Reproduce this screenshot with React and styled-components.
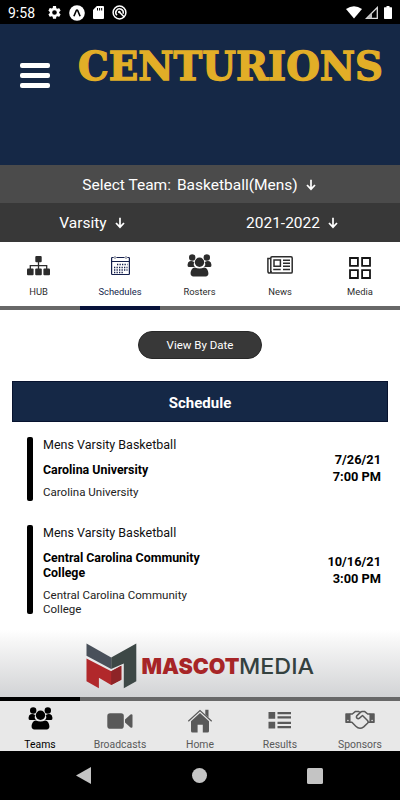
import React from "react";
import styled, { createGlobalStyle } from "styled-components";

const Global = createGlobalStyle`
  * { box-sizing: border-box; }
  body { margin: 0; background: #fff; font-family: Roboto, "Liberation Sans", sans-serif; }
  svg { display: block; flex: none; }
`;

const Screen = styled.div`
  width: 400px;
  height: 800px;
  display: flex;
  flex-direction: column;
  overflow: hidden;
  background: #fff;
`;
const StatusBar = styled.div`
  height: 24px;
  flex: none;
  background: #000;
  color: #fff;
  display: flex;
  align-items: center;
  justify-content: space-between;
  padding: 1px 8px 0;
`;
const StatusGroup = styled.div`
  display: flex;
  align-items: center;
  gap: ${(p) => p.$gap}px;
`;
const Clock = styled.span`
  font-size: 14px;
  line-height: 22px;
  width: 32px;
`;
const Header = styled.header`
  height: 141px;
  flex: none;
  background: #152846;
  display: flex;
  align-items: flex-start;
`;
const MenuButton = styled.div`
  margin: 39px 0 0 20px;
  width: 30px;
  display: flex;
  flex-direction: column;
  gap: 5px;
`;
const MenuLine = styled.div`
  height: 5px;
  border-radius: 2px;
  background: #fff;
`;
const TeamTitle = styled.svg`
  margin: 18px 0 0 26px;
  overflow: visible;
`;
const SelectRow = styled.div`
  height: ${(p) => p.$h}px;
  flex: none;
  display: grid;
  grid-template-columns: ${(p) => p.$cols};
  align-items: center;
  background: ${(p) => p.$bg};
  color: #fff;
  font-size: 15.5px;
`;
const Select = styled.div`
  display: flex;
  align-items: center;
  justify-content: center;
  gap: 6px;
  padding-top: ${(p) => p.$top}px;
  white-space: nowrap;
`;
const ArrowIcon = styled.svg`
  margin-left: 2px;
`;
const Tabs = styled.nav`
  height: 68px;
  flex: none;
  display: grid;
  grid-template-columns: repeat(5, 80px);
`;
const Tab = styled.div`
  display: flex;
  flex-direction: column;
  align-items: center;
  color: ${(p) => (p.$active ? "#141f4c" : "#2c2c2c")};
  border-bottom: 4px solid ${(p) => (p.$active ? "#08123a" : "#686868")};
  padding-right: ${(p) => p.$nudge || 0}px;
`;
const TabIcon = styled.div`
  height: 41px;
  padding-top: ${(p) => p.$top}px;
`;
const TabLabel = styled.span`
  font-size: 9.4px;
  line-height: 18px;
`;
const Content = styled.main`
  height: 320px;
  flex: none;
  padding: 21px 12px 0;
`;
const DateButton = styled.div`
  width: 124px;
  height: 28px;
  margin: 0 auto;
  border-radius: 14px;
  background: #383838;
  border: 1px solid #282828;
  color: #fff;
  font-size: 11.5px;
  line-height: 27px;
  text-align: center;
`;
const ScheduleTitle = styled.div`
  margin-top: 22px;
  height: 41px;
  background: #152846;
  border: 1px solid #07132f;
  color: #fff;
  font-size: 15px;
  font-weight: 700;
  line-height: 42px;
  text-align: center;
`;
const Game = styled.div`
  display: flex;
  margin: ${(p) => p.$top}px 7px 0 15px;
  height: ${(p) => p.$h}px;
`;
const Marker = styled.div`
  width: 6px;
  border-radius: 2px;
  background: #000;
  flex: none;
`;
const GameInfo = styled.div`
  width: 170px;
  margin-left: 10px;
`;
const League = styled.div`
  font-size: 12.5px;
  line-height: 15px;
  white-space: nowrap;
  color: #111;
`;
const Opponent = styled.div`
  margin-top: 10px;
  font-size: 12.4px;
  line-height: 15px;
  font-weight: 700;
  color: #000;
`;
const Venue = styled.div`
  margin-top: 9px;
  font-size: 11.55px;
  line-height: 13.7px;
  color: #222;
`;
const When = styled.div`
  margin-left: auto;
  padding-top: ${(p) => p.$top}px;
  text-align: right;
  font-size: 12.8px;
  line-height: 17px;
  font-weight: 700;
`;
const Sponsor = styled.div`
  height: 67px;
  flex: none;
  padding: 13px 0 0 85px;
  background: linear-gradient(#fff 0, #f6f6f6 12px, #d2d3d5 100%);
`;
const BottomNav = styled.nav`
  height: 54px;
  flex: none;
  display: grid;
  grid-template-columns: repeat(5, 80px);
  background: #e8e8e8;
`;
const NavItem = styled.div`
  display: flex;
  flex-direction: column;
  align-items: center;
  color: ${(p) => (p.$active ? "#000" : "#595959")};
  border-top: 4px solid ${(p) => (p.$active ? "#000" : "#686868")};
`;
const NavIcon = styled.div`
  height: 35px;
  padding-top: ${(p) => p.$top}px;
`;
const NavLabel = styled.span`
  font-size: 10.4px;
  line-height: 18px;
  white-space: nowrap;
`;
const SystemNav = styled.div`
  flex: 1;
  background: #000;
  display: flex;
  align-items: center;
  justify-content: space-between;
  padding: 0 77px 0 76px;
`;

const Arrow = () => (
  <ArrowIcon width="10" height="12" viewBox="0 0 10 12" fill="none" stroke="#fff" strokeWidth="1.7">
    <path d="M5 .7v9.500M1 6l4 4.200L9 6" />
  </ArrowIcon>
);

const Gear = () => (
  <svg width="13" height="13" viewBox="2 2 20 20" fill="#fff">
    <path d="M19.14 12.94c.04-.3.06-.61.06-.94s-.02-.64-.07-.94l2.03-1.58a.49.49 0 0 0 .12-.61l-1.92-3.32a.49.49 0 0 0-.59-.22l-2.39.96a7 7 0 0 0-1.62-.94l-.36-2.54A.48.48 0 0 0 13.92 2h-3.84a.48.48 0 0 0-.47.41l-.36 2.54c-.59.24-1.13.57-1.62.94l-2.39-.96a.48.48 0 0 0-.59.22L2.74 8.87a.48.48 0 0 0 .12.61l2.03 1.58a6 6 0 0 0 0 1.88l-2.03 1.58a.49.49 0 0 0-.12.61l1.92 3.32c.12.22.37.29.59.22l2.39-.96c.5.38 1.03.7 1.62.94l.36 2.54c.05.24.24.41.48.41h3.84c.24 0 .44-.17.47-.41l.36-2.54c.59-.24 1.13-.56 1.62-.94l2.39.96c.22.08.47 0 .59-.22l1.92-3.32a.48.48 0 0 0-.12-.61zM12 15.6A3.6 3.6 0 1 1 12 8.400a3.6 3.6 0 0 1 0 7.200z" />
  </svg>
);
const Expo = () => (
  <svg width="16" height="16" viewBox="0 0 16 16">
    <circle cx="8" cy="8" r="7.800" fill="#fff" />
    <path d="M4.900 11.300 7.300 5.500Q8 4.400 8.700 5.500L11.100 11.300" fill="none" stroke="#000" strokeWidth="1.600" />
  </svg>
);
const SdCard = () => (
  <svg width="11" height="13" viewBox="0 0 11 13">
    <path d="M3.800 0H10a1 1 0 0 1 1 1v11a1 1 0 0 1-1 1H1a1 1 0 0 1-1-1V4z" fill="#fff" />
    <path d="M4.500 2v2.500M6.600 2v2.500M8.700 2v2.500" stroke="#000" strokeWidth="1" />
  </svg>
);
const Focus = () => (
  <svg width="15" height="15" viewBox="0 0 15 15" fill="none" stroke="#fff" strokeWidth="1.500">
    <circle cx="7.500" cy="7.500" r="6.400" />
    <path d="M5 10.300A3.700 3.700 0 1 1 11 8.800M7 6.800 12 11.800" />
    <circle cx="7.300" cy="7" r="1.300" fill="#fff" stroke="none" />
  </svg>
);
const Wifi = () => (
  <svg width="16" height="13" viewBox="0 0 16 13">
    <path d="M0 3Q8-2.600 16 3L8 12.600z" fill="#fff" />
  </svg>
);
const Signal = () => (
  <svg width="13" height="13" viewBox="0 0 13 13">
    <path d="M12.300 1.500v10.800H1.500z" fill="none" stroke="#ddd" strokeWidth="1.300" />
    <path d="M7 7v5.300H2z" fill="#bbb" />
  </svg>
);
const Battery = () => (
  <svg width="8" height="13" viewBox="0 0 8 13">
    <path d="M2.500 0h3v1.300H7.500Q8 1.300 8 2v10.300q0 .7-.7.7H.7Q0 13 0 12.300V2q0-.7.5-.7h2z" fill="#fff" />
  </svg>
);

const Hierarchy = () => (
  <svg width="23" height="20" viewBox="0 0 23 20" fill="currentColor">
    <rect x="8.300" y="0" width="6.400" height="6.300" rx="1" />
    <rect x="0" y="12.500" width="6.600" height="6.800" rx="1" />
    <rect x="8.200" y="12.500" width="6.600" height="6.800" rx="1" />
    <rect x="16.400" y="12.500" width="6.600" height="6.800" rx="1" />
    <path d="M11.500 6v7M3.300 13V9.700h16.400V13" fill="none" stroke="currentColor" strokeWidth="1.300" />
  </svg>
);
const Calendar = () => (
  <svg width="19" height="20" viewBox="0 0 19 20" fill="none" stroke="currentColor">
    <path d="M2.700 1.500H1.200Q.6 1.500.6 2.300V17.800q0 .7.700.7H17.700q.7 0 .7-.7V2.300q0-.8-.7-.8H16.300M5.400 1.500h8.200M.6 5.500h17.800" strokeWidth="1.200" />
    <path d="M4 0v3M15 0v3" strokeWidth="1.100" stroke="#737788" />
    <path d="M6 8.500h10.500M3 11.500h13.500M3 14h13.500M3 16.500h10" strokeWidth="1.300" strokeDasharray="1.300 1.200" />
  </svg>
);
const Group = () => (
  <svg width="25" height="23" viewBox="0 0 25 23" fill="currentColor">
    <circle cx="5.200" cy="3.500" r="3.200" />
    <circle cx="19.800" cy="3.500" r="3.200" />
    <path d="M2.600 7.300Q5 6.700 7 7.900 6 10.800 7.900 13.100H2.200Q.5 13.100.5 10.900.7 7.800 2.600 7.300zM22.400 7.300Q20 6.700 18 7.900q1 2.900-.9 5.200h5.700q1.700 0 1.700-2.200-.2-3.100-2.100-3.600z" />
    <circle cx="12.500" cy="8.300" r="4.700" />
    <path d="M7.900 13.400q4.600 2.300 9.200 0c2.800.2 4.300 3.100 4.300 6.200q0 2.800-2.800 2.800H6.400q-2.800 0-2.800-2.800c0-3.100 1.500-6 4.300-6.200z" />
  </svg>
);
const Newspaper = () => (
  <svg width="26" height="18" viewBox="0 0 26 18" fill="none" stroke="currentColor" strokeWidth="1.500">
    <rect x="3.800" y=".8" width="21.400" height="16.300" rx="1.200" />
    <path d="M3.800 2.500H.9V15q0 2.100 1.700 2.100 1.500 0 1.500-2M7 4h6.400v6.300H7zM16 4.200h7M16 7.200h7M16 10.200h7M6.200 13.400h7.500M16 13.400h7" />
  </svg>
);
const Grid = () => (
  <svg width="22" height="22" viewBox="0 0 22 22" fill="none" stroke="#151515" strokeWidth="1.800">
    <path d="M1 1h7.900v7.900H1zM13.100 1H21v7.900h-7.900zM1 13.100h7.900V21H1zM13.100 13.100H21V21h-7.900z" />
  </svg>
);
const VideoCamera = () => (
  <svg width="26" height="16" viewBox="0 0 26 16" fill="currentColor">
    <rect x=".3" y=".3" width="16.500" height="15.400" rx="2.800" />
    <path d="M18 6.500 23.500 1.400Q25.500.6 25.500 2.500v11q0 1.900-2 1.100L18 9.500z" />
  </svg>
);
const House = () => (
  <svg width="26" height="24" viewBox="0 0 26 24" fill="currentColor">
    <path d="M4 12.300 13 4 22 12.300V22q0 1.500-1.500 1.500h-4.700v-7.800h-5.200v7.800H5.500q-1.500 0-1.500-1.500z" />
    <path d="M18.300.8h3.200v7.700l-3.200-2.900z" />
    <path d="M1.300 12.300 13 1.500l11.700 10.800" fill="none" stroke="currentColor" strokeWidth="1.200" />
  </svg>
);
const ListIcon = () => (
  <svg width="24" height="17" viewBox="0 0 24 17" fill="currentColor">
    <path d="M.5 0h6.700v6.700H.5zM.5 9.700h6.700v6.700H.5zM9.500 0H23v2.300H9.500zM9.500 4.300H23v2.300H9.500zM9.500 9.700H23V12H9.500zM9.500 14H23v2.300H9.500z" />
  </svg>
);
const Handshake = () => (
  <svg width="30" height="20" viewBox="0 0 30 20" fill="none" stroke="currentColor" strokeWidth="1.500" strokeLinejoin="round">
    <path d="M1 3.900h3.800v8.400H1zM25.200 3.900H29v8.400h-3.800z" fill="currentColor" />
    <circle cx="2.900" cy="10.500" r=".8" fill="#e8e8e8" stroke="none" />
    <circle cx="27.100" cy="10.500" r=".8" fill="#e8e8e8" stroke="none" />
    <path d="M4.800 4h2.500l2.900-2.400h3.600l1.500 1M25.200 4h-2.500l-2.900-2.400h-2.700q-.9 0-1.700.8L12 5.600q-1.100 1.300 0 2.600 1.200 1 2.500-.1L17.500 5.500 22.500 10.500q1.200 1.500 0 2.800L18.700 16.900Q14.500 20 10.800 16.300L6.900 12.300H4.800M22.800 12.200h2.400" />
  </svg>
);
const BrandLogo = () => (
  <svg width="230" height="50" viewBox="85 643 230 50">
    <path d="M86.500 643.600 111.200 657.500v11.400L86.500 655.800z" fill="#49505a" />
    <path d="M136.300 643.600v37.600l-12.500 7V663.600l-12.600 5.300v-11.400z" fill="#3d4846" />
    <path d="M86.500 658.400 111.200 671.300 121.300 665.700v14L111.200 685l-12.300-7.200v10.500l-12.400-7.100z" fill="#b1282b" />
    <path d="m111.200 671.300 10.100-5.600v14L111.200 685z" fill="#8e2427" />
    <text x="141.500" y="674" fontFamily="Inter, sans-serif" fontSize="22" fontWeight="900" fill="#a72527" textLength="98" lengthAdjust="spacingAndGlyphs">MASCOT</text>
    <text x="239" y="674" fontFamily="Inter, sans-serif" fontSize="22" fontWeight="500" fill="#34413f" textLength="75" lengthAdjust="spacingAndGlyphs">MEDIA</text>
  </svg>
);

const tabs = [
  { label: "HUB", Icon: Hierarchy, top: 14, nudge: 3 },
  { label: "Schedules", Icon: Calendar, top: 14, active: true },
  { label: "Rosters", Icon: Group, top: 12, nudge: 1 },
  { label: "News", Icon: Newspaper, top: 14 },
  { label: "Media", Icon: Grid, top: 15 },
];
const navItems = [
  { label: "Teams", Icon: Group, top: 6, active: true },
  { label: "Broadcasts", Icon: VideoCamera, top: 12 },
  { label: "Home", Icon: House, top: 8 },
  { label: "Results", Icon: ListIcon, top: 11 },
  { label: "Sponsors", Icon: Handshake, top: 9 },
];
const games = [
  { opponent: "Carolina University", venue: "Carolina University", date: "7/26/21", time: "7:00 PM", top: 15, h: 64, whenTop: 14 },
  { opponent: "Central Carolina Community College", venue: "Central Carolina Community College", date: "10/16/21", time: "3:00 PM", top: 24, h: 89, whenTop: 28 },
];

export default function App() {
  return (
    <Screen>
      <Global />
      <StatusBar>
        <StatusGroup $gap={8}>
          <Clock>9:58</Clock>
          <Gear />
          <Expo />
          <SdCard />
          <Focus />
        </StatusGroup>
        <StatusGroup $gap={3}>
          <Wifi />
          <Signal />
          <span />
          <Battery />
        </StatusGroup>
      </StatusBar>
      <Header>
        <MenuButton>
          <MenuLine />
          <MenuLine />
          <MenuLine />
        </MenuButton>
        <TeamTitle width="310" height="46" viewBox="0 0 310 46">
          <text x="2" y="37.800" fontFamily="DejaVu Serif, serif" fontWeight="700" fontSize="39" fill="#e2ae27" stroke="#e2ae27" strokeWidth="1.300" textLength="305" lengthAdjust="spacingAndGlyphs">CENTURIONS</text>
        </TeamTitle>
      </Header>
      <SelectRow $h={38} $bg="#4b4b4b" $cols="398px">
        <Select $top={2}>
          <span>Select Team:</span>
          <span>Basketball(Mens)</span>
          <Arrow />
        </Select>
      </SelectRow>
      <SelectRow $h={39} $bg="#383838" $cols="184px 216px">
        <Select $top={1}>
          <span>Varsity</span>
          <Arrow />
        </Select>
        <Select $top={1}>
          <span>2021-2022</span>
          <Arrow />
        </Select>
      </SelectRow>
      <Tabs>
        {tabs.map(({ label, Icon, top, active, nudge }) => (
          <Tab key={label} $active={active} $nudge={nudge}>
            <TabIcon $top={top}><Icon /></TabIcon>
            <TabLabel>{label}</TabLabel>
          </Tab>
        ))}
      </Tabs>
      <Content>
        <DateButton>View By Date</DateButton>
        <ScheduleTitle>Schedule</ScheduleTitle>
        {games.map((g) => (
          <Game key={g.date} $top={g.top} $h={g.h}>
            <Marker />
            <GameInfo>
              <League>Mens Varsity Basketball</League>
              <Opponent>{g.opponent}</Opponent>
              <Venue>{g.venue}</Venue>
            </GameInfo>
            <When $top={g.whenTop}>
              <div>{g.date}</div>
              <div>{g.time}</div>
            </When>
          </Game>
        ))}
      </Content>
      <Sponsor><BrandLogo /></Sponsor>
      <BottomNav>
        {navItems.map(({ label, Icon, top, active }) => (
          <NavItem key={label} $active={active}>
            <NavIcon $top={top}><Icon /></NavIcon>
            <NavLabel>{label}</NavLabel>
          </NavItem>
        ))}
      </BottomNav>
      <SystemNav>
        <svg width="15" height="17" viewBox="0 0 15 17"><path d="M15 0v17L0 8.500z" fill="#c4c4c4" /></svg>
        <svg width="15" height="15" viewBox="0 0 15 15"><circle cx="7.500" cy="7.500" r="7.500" fill="#c4c4c4" /></svg>
        <svg width="16" height="16" viewBox="0 0 16 16"><rect width="16" height="16" rx="1.500" fill="#c4c4c4" /></svg>
      </SystemNav>
    </Screen>
  );
}
